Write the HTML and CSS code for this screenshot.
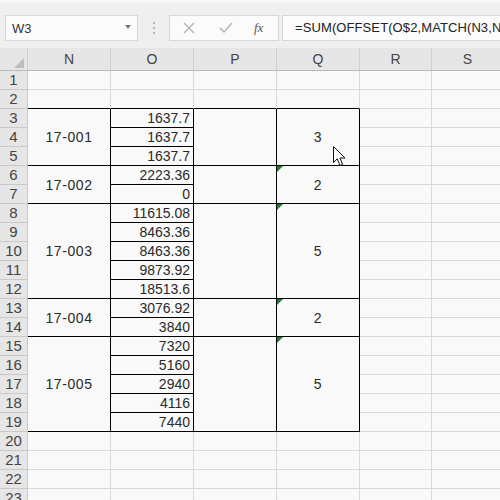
FILE: index.html
```html
<!DOCTYPE html>
<html>
<head>
<meta charset="utf-8">
<link rel="stylesheet" href="styles.css">
</head>
<body>
<div class="toolbar">
  <div class="namebox"><span class="ref">W3</span><span class="caret"></span></div>
  <div class="dots"><i></i><i></i><i></i></div>
  <div class="btns">
    <svg class="ico" width="14" height="14" viewBox="0 0 14 14"><path d="M2 2 L12 12 M12 2 L2 12" stroke="#b4b4b4" stroke-width="1.4" fill="none"/></svg>
    <svg class="ico" width="16" height="14" viewBox="0 0 16 14"><path d="M2 7 L6 11 L14 2" stroke="#b4b4b4" stroke-width="1.5" fill="none"/></svg>
    <span class="fx">fx</span>
  </div>
  <div class="formula">=SUM(OFFSET(O$2,MATCH(N3,N$2:N$19,0),,Q3))</div>
</div>
<table class="sheet">
  <colgroup>
    <col class="c-rh"><col class="c-w"><col class="c-w"><col class="c-w"><col class="c-w"><col class="c-n"><col class="c-n">
  </colgroup>
  <tr class="hdr"><th class="corner"><span class="tri"></span></th><th>N</th><th>O</th><th>P</th><th>Q</th><th>R</th><th>S</th></tr>
  <tr><th>1</th><td></td><td></td><td></td><td></td><td></td><td></td></tr>
  <tr><th>2</th><td class="top"></td><td class="top"></td><td class="top"></td><td class="top"></td><td></td><td></td></tr>
  <tr><th>3</th><td class="grp" rowspan="3">17-001</td><td class="num">1637.7</td><td class="grp" rowspan="3"></td><td class="grp" rowspan="3">3</td><td></td><td></td></tr>
  <tr><th>4</th><td class="num">1637.7</td><td></td><td></td></tr>
  <tr><th>5</th><td class="num">1637.7</td><td></td><td></td></tr>
  <tr><th>6</th><td class="grp" rowspan="2">17-002</td><td class="num">2223.36</td><td class="grp" rowspan="2"></td><td class="grp flag" rowspan="2">2</td><td></td><td></td></tr>
  <tr><th>7</th><td class="num">0</td><td></td><td></td></tr>
  <tr><th>8</th><td class="grp" rowspan="5">17-003</td><td class="num">11615.08</td><td class="grp" rowspan="5"></td><td class="grp flag" rowspan="5">5</td><td></td><td></td></tr>
  <tr><th>9</th><td class="num">8463.36</td><td></td><td></td></tr>
  <tr><th>10</th><td class="num">8463.36</td><td></td><td></td></tr>
  <tr><th>11</th><td class="num">9873.92</td><td></td><td></td></tr>
  <tr><th>12</th><td class="num">18513.6</td><td></td><td></td></tr>
  <tr><th>13</th><td class="grp" rowspan="2">17-004</td><td class="num">3076.92</td><td class="grp" rowspan="2"></td><td class="grp flag" rowspan="2">2</td><td></td><td></td></tr>
  <tr><th>14</th><td class="num">3840</td><td></td><td></td></tr>
  <tr><th>15</th><td class="grp" rowspan="5">17-005</td><td class="num">7320</td><td class="grp" rowspan="5"></td><td class="grp flag" rowspan="5">5</td><td></td><td></td></tr>
  <tr><th>16</th><td class="num">5160</td><td></td><td></td></tr>
  <tr><th>17</th><td class="num">2940</td><td></td><td></td></tr>
  <tr><th>18</th><td class="num">4116</td><td></td><td></td></tr>
  <tr><th>19</th><td class="num">7440</td><td></td><td></td></tr>
  <tr><th>20</th><td></td><td></td><td></td><td></td><td></td><td></td></tr>
  <tr><th>21</th><td></td><td></td><td></td><td></td><td></td><td></td></tr>
  <tr><th>22</th><td></td><td></td><td></td><td></td><td></td><td></td></tr>
  <tr><th>23</th><td></td><td></td><td></td><td></td><td></td><td></td></tr>
</table>
<svg class="cursor" width="14" height="21" viewBox="0 0 14 21"><path d="M0.5 0.5 L0.5 16.5 L4.3 12.8 L7 19.5 L9.6 18.4 L7 12 L12 12 Z" fill="#fff" stroke="#111" stroke-width="1" stroke-linejoin="round"/></svg>
</body>
</html>
```
FILE: styles.css
```css
html, body {
  margin: 0;
  padding: 0;
}
body {
  width: 500px;
  height: 500px;
  overflow: hidden;
  position: relative;
  background: #f9f9f9;
  font-family: "Liberation Sans", Arial, sans-serif;
}
.toolbar {
  height: 48px;
  box-sizing: border-box;
  background: #efefef;
  border-top: 3px solid #f6f6f6;
  padding-top: 12px;
  display: flex;
  align-items: flex-start;
  white-space: nowrap;
}
.namebox {
  margin-left: 5px;
  width: 133px;
  height: 26px;
  box-sizing: border-box;
  background: #fbfbfb;
  border: 1px solid #d8d8d8;
  display: flex;
  align-items: center;
  justify-content: space-between;
  padding: 0 6px 0 6px;
}
.ref {
  font-size: 13px;
  color: #333;
}
.caret {
  width: 0;
  height: 0;
  border-left: 3.5px solid transparent;
  border-right: 3.5px solid transparent;
  border-top: 4px solid #777;
  margin-top: -2px;
}
.dots {
  width: 31px;
  height: 26px;
  display: flex;
  flex-direction: column;
  align-items: center;
  justify-content: center;
  gap: 3px;
}
.dots i {
  width: 2px;
  height: 2px;
  background: #b4b4b4;
}
.btns {
  width: 110px;
  height: 26px;
  box-sizing: border-box;
  background: #fbfbfb;
  border: 1px solid #d8d8d8;
  display: flex;
  align-items: center;
  padding-left: 12px;
  gap: 22px;
}
.fx {
  font-family: "Liberation Serif", serif;
  font-style: italic;
  font-size: 13px;
  color: #555;
  margin-left: -2px;
}
.formula {
  margin-left: 3px;
  flex: 1;
  height: 26px;
  box-sizing: border-box;
  background: #fbfbfb;
  border: 1px solid #d8d8d8;
  border-right: none;
  font-size: 13px;
  letter-spacing: 0.1px;
  line-height: 24px;
  color: #222;
  padding-left: 12px;
  overflow: hidden;
}
.sheet {
  border-collapse: separate;
  border-spacing: 0;
  table-layout: fixed;
  width: 504px;
}
.c-rh { width: 28px; }
.c-w { width: 83px; }
.c-n { width: 72px; }
.sheet tr { height: 19px; }
.sheet tr.hdr { height: 23px; }
.sheet th, .sheet td {
  padding: 0;
  box-sizing: border-box;
  overflow: hidden;
  white-space: nowrap;
}
.sheet th {
  background: #e6e6e6;
  border-right: 1px solid #c9c9c9;
  border-bottom: 1px solid #c9c9c9;
  font-weight: normal;
  font-size: 15px;
  color: #444;
  text-align: center;
  line-height: 18px;
}
.sheet tr.hdr th {
  font-size: 14px;
  border-right-color: #cfcfcf;
  border-bottom-color: #b9b9b9;
}
.sheet th.corner {
  position: relative;
}
.tri {
  position: absolute;
  right: 3px;
  bottom: 2px;
  width: 0;
  height: 0;
  border-left: 10px solid transparent;
  border-bottom: 10px solid #bdbdbd;
}
.sheet td {
  background: #f9f9f9;
  border-right: 1px solid #d9d9d9;
  border-bottom: 1px solid #d9d9d9;
  font-size: 14px;
  color: #2a2a2a;
  line-height: 18px;
}
.sheet td.top {
  border-bottom-color: #000;
}
.sheet td.grp {
  border-right-color: #000;
  border-bottom-color: #000;
  text-align: center;
  vertical-align: middle;
  letter-spacing: 0.6px;
  position: relative;
}
.sheet td.num {
  border-right-color: #000;
  border-bottom-color: #000;
  text-align: right;
  padding-right: 3px;
  vertical-align: bottom;
}
.sheet td.flag::before {
  content: "";
  position: absolute;
  left: 0;
  top: 0;
  width: 0;
  height: 0;
  border-top: 6px solid #1f7a30;
  border-right: 6px solid transparent;
}
.cursor {
  position: absolute;
  left: 333px;
  top: 146px;
}
```
